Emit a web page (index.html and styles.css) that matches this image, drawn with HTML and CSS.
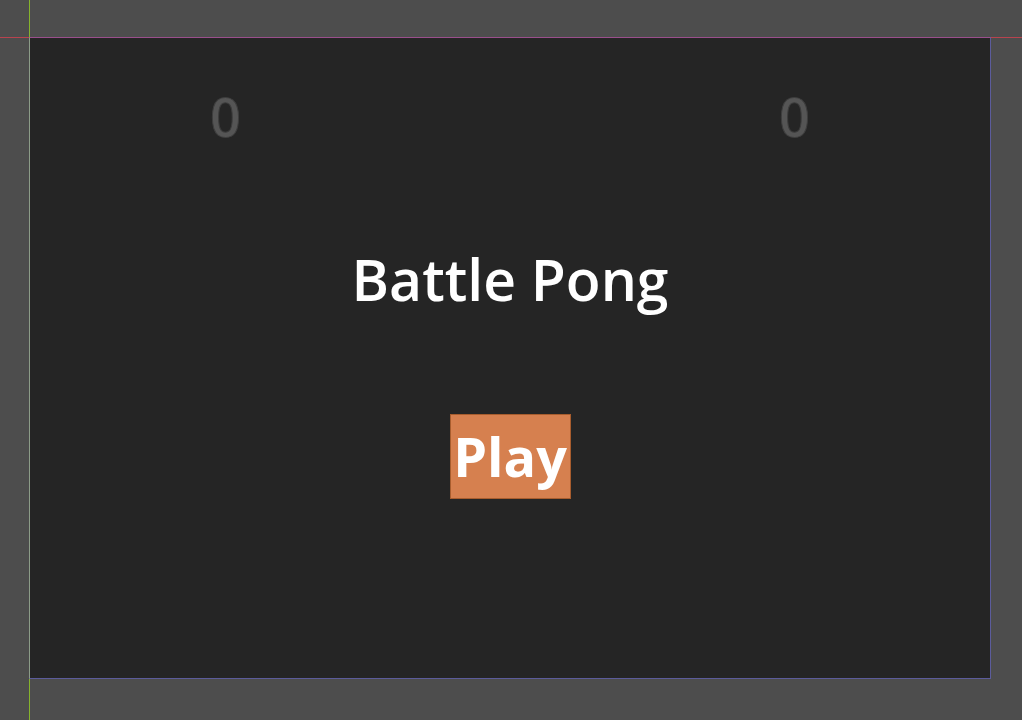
FILE: index.html
```html
<!DOCTYPE html>
<html lang="en">
<head>
  <meta charset="UTF-8">
  <meta name="viewport" content="width=device-width, initial-scale=1">
  <title>Battle Pong</title>
  <link rel="stylesheet" href="styles.css">
</head>
<body>

  <div class="eje-x"></div>
  <div class="eje-y"></div>

  <div class="pantalla">
    <div class="marcador">
      <span class="punto">0</span>
      <span class="punto">0</span>
    </div>
    <h1 class="titulo">Battle Pong</h1>
    <button class="boton-play">Play</button>
  </div>

</body>
</html>
```

FILE: styles.css
```css
body {
  margin: 0;
  background: #4d4d4d;
  font-family: 'Open Sans', 'Liberation Sans', sans-serif;
  height: 720px;
  overflow: hidden;
}

.eje-x {
  position: absolute;
  left: 0;
  top: 37px;
  width: 100%;
  height: 1px;
  background: #b8434f;
}

.eje-y {
  position: absolute;
  left: 29px;
  top: 0;
  width: 1px;
  height: 100%;
  background: #86b32c;
}

.pantalla {
  position: relative;
  margin: 37px 0 0 29px;
  width: 960px;
  height: 640px;
  background: #252525;
  border: 1px solid #5c5c9c;
  border-top-color: #9a4f8c;
  border-left-color: #8c9c88;
  display: flex;
  flex-direction: column;
  align-items: center;
}

.marcador {
  width: 100%;
  display: flex;
  justify-content: space-between;
  padding: 0 180px 0 180px;
  box-sizing: border-box;
  margin-top: 42px;
}

.punto {
  font-size: 54px;
  font-weight: 600;
  line-height: 72px;
  color: #555555;
  -webkit-text-stroke: 1px #3e3e3e;
}

.titulo {
  margin: 88px 0 0;
  font-size: 57px;
  font-weight: 600;
  line-height: 78px;
  color: #ffffff;
}

.boton-play {
  margin-top: 96px;
  width: 121px;
  height: 85px;
  padding: 0;
  background: #d6804f;
  border: 1px solid #a85d2e;
  color: #ffffff;
  font-family: 'Open Sans', 'Liberation Sans', sans-serif;
  font-size: 54px;
  font-weight: 700;
  line-height: 83px;
  cursor: pointer;
}
```
